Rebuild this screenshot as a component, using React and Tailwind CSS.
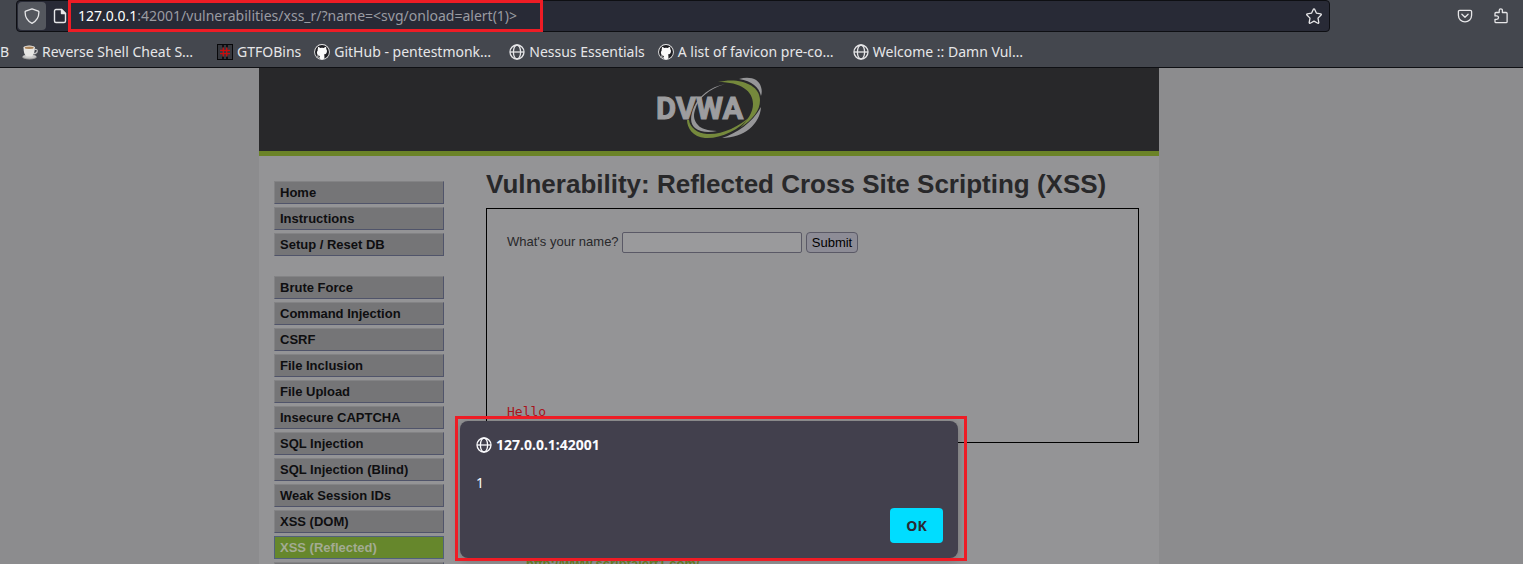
import React from "react";

function Globe() {
  return (
    <svg viewBox="0 0 16 16" fill="none" stroke="currentColor" strokeWidth="1.3" className="size-4 shrink-0" aria-hidden="true">
      <circle cx="8" cy="8" r="7" />
      <ellipse cx="8" cy="8" rx="3.6" ry="7" />
      <path d="M1 8h14" />
    </svg>
  );
}

function GitHub() {
  return (
    <svg viewBox="0 0 16 16" className="size-4 shrink-0" aria-hidden="true">
      <circle cx="8" cy="8" r="7.9" fill="#e8e8e8" />
      <circle cx="8" cy="8" r="7" fill="#1d1d22" />
      <path
        fill="#fafafa"
        d="M3.9 3.1c.9 0 1.7.5 2.2.9a8 8 0 0 1 3.8 0c.5-.4 1.3-.9 2.2-.9.3.7.2 1.4.1 1.8.5.6.8 1.3.8 2.1 0 2.6-1.5 3.3-3.1 3.5.4.4.5.9.5 1.5v2.8a7.4 7.4 0 0 1-4.7 0v-1.3c-1.2.2-1.9-.2-2.3-1-.2-.4-.5-.7-.8-.9.9-.2 1.3.4 1.7.9.4.5.9.6 1.4.4 0-.4.2-.7.4-.9-1.7-.2-3.2-.9-3.2-3.5 0-.9.3-1.6.8-2.1-.1-.5-.1-1.2.2-1.8z"
      />
    </svg>
  );
}

function Cup() {
  return (
    <svg viewBox="0 0 16 16" className="size-4 shrink-0" aria-hidden="true">
      <ellipse cx="7.5" cy="13" rx="7.3" ry="2.6" fill="#9b9b9b" />
      <ellipse cx="7.5" cy="12.5" rx="6.6" ry="1.9" fill="#c9c9c9" />
      <path d="M12.5 5.5c2-.6 3 .3 2.7 1.8-.3 1.5-1.9 2.3-3.6 2.5" fill="none" stroke="#c4c4c4" strokeWidth="1.2" />
      <path d="M1.5 3.5h11.3c0 4.5-1 7.5-3 9H4.5c-2-1.5-3-4.5-3-9z" fill="#e6e6e4" />
      <ellipse cx="7.2" cy="3.5" rx="5.7" ry="1.9" fill="#f2f0ec" />
      <ellipse cx="7.2" cy="3.7" rx="4.6" ry="1.2" fill="#a98257" />
    </svg>
  );
}

function Hash() {
  return (
    <svg viewBox="0 0 16 16" className="size-4 shrink-0" aria-hidden="true">
      <rect width="16" height="16" fill="#08080a" />
      <rect x="1" y="1" width="14" height="14" fill="#36383e" />
      <path d="M6 1v2.5M10 1v2.5M6 12.5V15M10 12.5V15" stroke="#101013" strokeWidth="2" />
      <path d="M6.3 3.5v9M9.7 3.5v9M3 6.3h10M3 9.7h10" stroke="#c80d0d" strokeWidth="1.3" />
    </svg>
  );
}

function Shield() {
  return (
    <svg viewBox="0 0 16 16" fill="none" stroke="currentColor" strokeWidth="1.3" strokeLinejoin="round" className="size-4" aria-hidden="true">
      <path d="M8 .8 14.3 3.2c.4.2.6.5.6.9C14.9 9.5 12.3 13.3 8 15.3 3.7 13.3 1.1 9.5 1.1 4.1c0-.4.2-.7.6-.9z" />
    </svg>
  );
}

function Page() {
  return (
    <svg viewBox="0 0 16 16" fill="none" stroke="currentColor" strokeWidth="1.4" strokeLinejoin="round" className="size-4" aria-hidden="true">
      <path d="M9.5 1.5H4A1.5 1.5 0 0 0 2.5 3v10A1.5 1.5 0 0 0 4 14.5h8a1.5 1.5 0 0 0 1.5-1.5V5.5z" />
      <path d="M9.5 1.5v4h4z" fill="currentColor" />
    </svg>
  );
}

function Star() {
  return (
    <svg viewBox="0 0 16 16" fill="none" stroke="currentColor" strokeWidth="1.3" strokeLinejoin="round" className="size-4" aria-hidden="true">
      <path d="M7.4 1.2a.7.7 0 0 1 1.2 0l1.9 4 4.2.6c.6.1.8.8.4 1.2L12 10.1l.8 4.4c.1.5-.5.9-1 .7L8 13.1l-3.8 2.1c-.5.2-1.1-.2-1-.7l.8-4.4L.9 7c-.4-.4-.2-1.1.4-1.2l4.2-.6z" />
    </svg>
  );
}

function Pocket() {
  return (
    <svg viewBox="0 0 16 16" fill="none" stroke="currentColor" strokeWidth="1.3" strokeLinecap="round" strokeLinejoin="round" className="size-4" aria-hidden="true">
      <path d="M2.7 2.3h10.6c.8 0 1.3.5 1.3 1.3V7.3a6.6 6.6 0 0 1-13.2 0V3.6c0-.8.5-1.3 1.3-1.3z" />
      <path d="M4.9 6.2 8 9.2l3.1-3" />
    </svg>
  );
}

function Puzzle() {
  return (
    <svg viewBox="0 0 16 16" fill="none" stroke="currentColor" strokeWidth="1.3" strokeLinejoin="round" className="size-4" aria-hidden="true">
      <path d="M6.2 4.5V2.4a1.6 1.6 0 0 1 3.2 0v2.1h3.7c.6 0 1 .4 1 1v8.2c0 .6-.4 1-1 1H3c-.6 0-1-.4-1-1v-2.4h1.8a1.7 1.7 0 0 0 0-3.4H2V5.5c0-.6.4-1 1-1z" />
    </svg>
  );
}

function Logo() {
  return (
    <svg viewBox="0 0 110 64" className="h-16 w-[110px]" role="img" aria-label="DVWA">
      <path d="M71 8C56 11 45 20 40 31c-4 9-4 17 1 21 5 4 13 5 22 3-9-.5-16-2-19-6-4-4-5-9-3-15C44 22 55 13 71 8z" fill="#969698" />
      <path d="M33 44c0 8 6 17 18 18 15 1 33-7 46-22C84 51 68 59 53 58c-9-.5-17-6-18-14z" fill="#75893c" />
      <path d="M85 3c11-3 20 0 22 8 1 3 1 6 0 9C105 11 98 5 85 3z" fill="#969698" />
      <path d="M107 31c-1 17-17 31-39 31C83 57 98 47 107 31z" fill="#969698" />
      <path d="M64 6c20-5 42 2 42 18 0 11-7 19-20 28 8-8 13-16 13-24C99 15 87 6 64 6z" fill="#75893c" />
      <text x="2" y="43" className="font-['Roboto',sans-serif] font-bold" fontSize="31" fill="#9d9d9f" stroke="#9d9d9f" strokeWidth="1">
        DVWA
      </text>
    </svg>
  );
}

const bookmarks = [
  { label: "Reverse Shell Cheat S…", icon: <Cup />, full: true },
  { label: "GTFOBins", icon: <Hash /> },
  { label: "GitHub - pentestmonk…", icon: <GitHub />, full: true },
  { label: "Nessus Essentials", icon: <Globe /> },
  { label: "A list of favicon pre-co…", icon: <GitHub />, full: true },
  { label: "Welcome :: Damn Vul…", icon: <Globe />, full: true },
];

const menu = [
  ["Home", "Instructions", "Setup / Reset DB"],
  [
    "Brute Force",
    "Command Injection",
    "CSRF",
    "File Inclusion",
    "File Upload",
    "Insecure CAPTCHA",
    "SQL Injection",
    "SQL Injection (Blind)",
    "Weak Session IDs",
    "XSS (DOM)",
    "XSS (Reflected)",
    "XSS (Stored)",
  ],
];

function Toolbar() {
  return (
    <header className="relative shrink-0 border-b border-[#0f1014] bg-[#44474e] font-['Noto_Sans',sans-serif] text-sm text-[#e6e6e8]">
      <div className="flex h-8 items-center pl-4">
        <div className="flex h-8 min-w-0 flex-1 items-center rounded border border-[#0e0f13] bg-[#282a36] pr-[7px]">
          <button type="button" aria-label="Tracking protection" className="ml-px flex h-7 w-7 shrink-0 items-center justify-center rounded bg-[#54575e]">
            <Shield />
          </button>
          <button type="button" aria-label="Site information" className="ml-1.5 flex shrink-0 items-center">
            <Page />
          </button>
          <div className="ml-2.5 min-w-0 flex-1 truncate text-[#9a9ba2]">
            <span className="text-white">127.0.0.1</span>:42001/vulnerabilities/xss_r/?name=&lt;svg/onload=alert(1)&gt;
          </div>
          <button type="button" aria-label="Bookmark this page" className="shrink-0">
            <Star />
          </button>
        </div>
        <div className="flex w-[193px] shrink-0 items-center justify-end gap-5 pr-[14px]">
          <button type="button" aria-label="Save to Pocket">
            <Pocket />
          </button>
          <button type="button" aria-label="Extensions">
            <Puzzle />
          </button>
        </div>
      </div>
      <nav aria-label="Bookmarks" className="flex h-[35px] items-center gap-[13px] overflow-hidden pt-1">
        <a href="#b" className="w-[9px] shrink-0">
          B
        </a>
        {bookmarks.map((b) => (
          <a key={b.label} href="#bookmark" className={`flex shrink-0 items-center gap-1 whitespace-nowrap ${b.full ? "w-[182px]" : ""}`}>
            {b.icon}
            <span>{b.label}</span>
          </a>
        ))}
      </nav>
      <div className="pointer-events-none absolute top-0 left-[68px] h-8 w-[475px] border-[3px] border-[#ee1c25]" />
    </header>
  );
}

function SideMenu() {
  return (
    <nav aria-label="Sections" className="w-[170px] shrink-0 space-y-5 text-[13px] font-bold">
      {menu.map((group) => (
        <ul key={group[0]} className="space-y-[3px]">
          {group.map((item) => (
            <li key={item}>
              <a
                href="#section"
                className={
                  item === "XSS (Reflected)"
                    ? "block h-[23px] border border-[#51617a] bg-[#66872c] pl-[5px] leading-[21px] text-[#a3ab93]"
                    : "block h-[23px] border border-t-[#838385] border-r-[#50546a] border-b-[#50546a] border-l-[#838385] bg-[#757577] pl-[5px] leading-[21px] text-[#0e0e10]"
                }
              >
                {item}
              </a>
            </li>
          ))}
        </ul>
      ))}
    </nav>
  );
}

function AlertDialog() {
  return (
    <div
      role="alertdialog"
      aria-label="127.0.0.1:42001"
      className="absolute top-[353px] left-1/2 flex h-[137px] w-[498px] -translate-x-1/2 flex-col rounded-lg bg-[#42404d] pt-4 pr-[15px] pb-[15px] pl-4 font-['Noto_Sans',sans-serif] text-sm text-[#fbfbfe] shadow-[0_2px_10px_rgba(0,0,0,0.25)]"
    >
      <div className="flex h-4 items-center gap-1 font-bold">
        <Globe />
        <span>127.0.0.1:42001</span>
      </div>
      <p className="mt-5">1</p>
      <button type="button" className="mt-auto h-[35px] w-[53px] shrink-0 self-end rounded bg-[#00ddff] font-bold text-[#2b2a33]">
        OK
      </button>
      <div className="pointer-events-none absolute -top-[5px] -right-[9px] -bottom-[3px] -left-[5px] border-[3px] border-[#ee1c25]" />
    </div>
  );
}

export default function App() {
  return (
    <div className="flex h-screen flex-col overflow-hidden bg-[#8c8c8e]">
      <Toolbar />
      <div className="min-h-0 flex-1 overflow-hidden pr-[105px] font-['Liberation_Sans',sans-serif] text-[13px] text-[#28282a]">
        <div className="relative">
          <div className="mx-auto w-[900px] max-w-full bg-[#949496]">
            <div className="flex h-[88px] justify-center border-b-[5px] border-[#6b8327] bg-[#28282a] pt-2">
              <Logo />
            </div>
            <div className="flex gap-[42px] pt-[25px] pr-5 pl-[15px]">
              <SideMenu />
              <main className="-mt-3 min-w-0 flex-1">
                <h1 className="text-[26px] leading-[30px] font-bold">Vulnerability: Reflected Cross Site Scripting (XSS)</h1>
                <section className="mt-[9px] h-[235px] border border-black px-5 pt-[23px]">
                  <form className="flex h-[21px] items-center gap-1" onSubmit={(e) => e.preventDefault()}>
                    <label htmlFor="name" className="-mt-0.5 w-[111px] whitespace-nowrap">
                      What's your name?
                    </label>
                    <input id="name" type="text" className="h-[21px] w-[180px] rounded-xs border border-[#5a5966] bg-[#9a9a9c] px-1" />
                    <button type="submit" className="h-[21px] w-[52px] rounded border border-[#5a5966] bg-[#8d8c96] text-black">
                      Submit
                    </button>
                  </form>
                  <pre className="mt-[151px] font-['DejaVu_Sans_Mono',monospace] leading-4 text-[#a8141c]">Hello</pre>
                </section>
                <a href="#reference" className="mt-[113px] ml-10 block leading-[15px] font-bold text-[#6b8327]">
                  http://www.scriptalert1.com/
                </a>
              </main>
            </div>
          </div>
          <AlertDialog />
        </div>
      </div>
    </div>
  );
}
